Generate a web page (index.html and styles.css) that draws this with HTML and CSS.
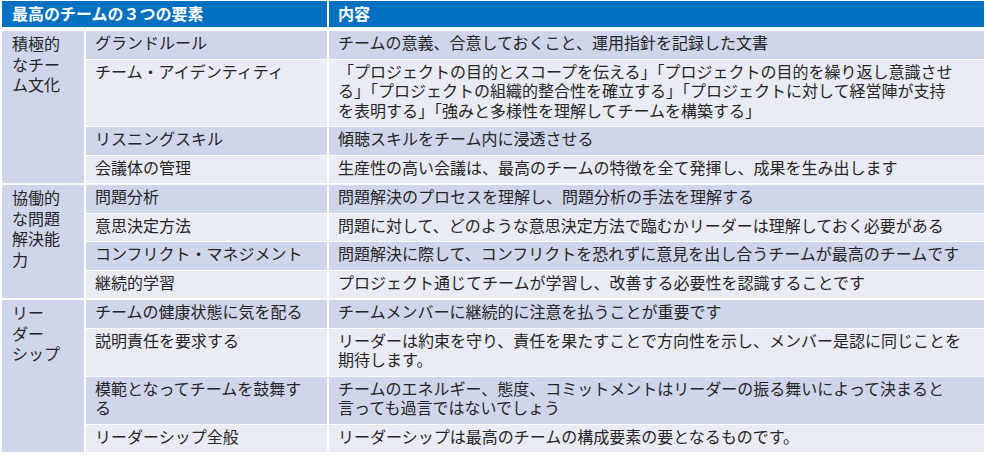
FILE: index.html
```html
<!DOCTYPE html>
<html lang="ja">
<head>
<meta charset="utf-8">
<link rel="stylesheet" href="styles.css">
</head>
<body>
<table class="tbl">
  <colgroup>
    <col class="c1"><col class="c2"><col class="c3">
  </colgroup>
  <thead>
    <tr>
      <th colspan="2">最高のチームの３つの要素</th>
      <th>内容</th>
    </tr>
  </thead>
  <tbody>
    <tr class="dark group">
      <td rowspan="4" class="cat">積極的<br>なチー<br>ム文化</td>
      <td>グランドルール</td>
      <td>チームの意義、合意しておくこと、運用指針を記録した文書</td>
    </tr>
    <tr class="light">
      <td>チーム・アイデンティティ</td>
      <td>「プロジェクトの目的とスコープを伝える」「プロジェクトの目的を繰り返し意識させ<br>る」「プロジェクトの組織的整合性を確立する」「プロジェクトに対して経営陣が支持<br>を表明する」「強みと多様性を理解してチームを構築する」</td>
    </tr>
    <tr class="dark">
      <td>リスニングスキル</td>
      <td>傾聴スキルをチーム内に浸透させる</td>
    </tr>
    <tr class="light">
      <td>会議体の管理</td>
      <td>生産性の高い会議は、最高のチームの特徴を全て発揮し、成果を生み出します</td>
    </tr>
    <tr class="dark group">
      <td rowspan="4" class="cat">協働的<br>な問題<br>解決能<br>力</td>
      <td>問題分析</td>
      <td>問題解決のプロセスを理解し、問題分析の手法を理解する</td>
    </tr>
    <tr class="light">
      <td>意思決定方法</td>
      <td>問題に対して、どのような意思決定方法で臨むかリーダーは理解しておく必要がある</td>
    </tr>
    <tr class="dark">
      <td>コンフリクト・マネジメント</td>
      <td>問題解決に際して、コンフリクトを恐れずに意見を出し合うチームが最高のチームです</td>
    </tr>
    <tr class="light">
      <td>継続的学習</td>
      <td>プロジェクト通じてチームが学習し、改善する必要性を認識することです</td>
    </tr>
    <tr class="dark group">
      <td rowspan="4" class="cat">リー<br>ダー<br>シップ</td>
      <td>チームの健康状態に気を配る</td>
      <td>チームメンバーに継続的に注意を払うことが重要です</td>
    </tr>
    <tr class="light">
      <td>説明責任を要求する</td>
      <td>リーダーは約束を守り、責任を果たすことで方向性を示し、メンバー是認に同じことを<br>期待します。</td>
    </tr>
    <tr class="dark">
      <td>模範となってチームを鼓舞す<br>る</td>
      <td>チームのエネルギー、態度、コミットメントはリーダーの振る舞いによって決まると<br>言っても過言ではないでしょう</td>
    </tr>
    <tr class="light">
      <td>リーダーシップ全般</td>
      <td>リーダーシップは最高のチームの構成要素の要となるものです。</td>
    </tr>
  </tbody>
</table>
</body>
</html>
```
FILE: styles.css
```css
html, body {
  margin: 0;
  padding: 0;
  background: #ffffff;
}

body {
  font-family: "Noto Sans CJK JP", "Noto Sans", sans-serif;
  font-size: 16px;
  color: #262626;
}

.tbl {
  margin: 1px 0 0 2px;
  width: 982px;
  table-layout: fixed;
  border-collapse: collapse;
}

.c1 { width: 83px; }
.c2 { width: 243px; }
.c3 { width: 656px; }

.tbl th {
  background: #0070c0;
  color: #ffffff;
  font-weight: bold;
  text-align: left;
  line-height: 19px;
  padding: 3px 8px 4px 9px;
  border-left: 2px solid #ffffff;
  border-right: 2px solid #ffffff;
  border-bottom: 4px solid #ffffff;
  white-space: nowrap;
}

.tbl th:first-child {
  border-left: none;
  padding-left: 10px;
}

.tbl th:last-child {
  border-right: none;
}

.tbl td {
  line-height: 19.5px;
  padding: 2px 4px 6px 9px;
  vertical-align: top;
  white-space: nowrap;
  border-top: 1px solid #ffffff;
  border-bottom: 1px solid #ffffff;
  border-left: 2px solid #ffffff;
  border-right: 2px solid #ffffff;
}

.tbl td:first-child {
  border-left: none;
}

.tbl td:last-child {
  border-right: none;
}

.group td {
  border-top: 2px solid #ffffff;
}

.dark td {
  background: #cfd5ea;
}

.light td {
  background: #e9ebf5;
}

.tbl td.cat {
  background: #cfd5ea;
  line-height: 20.5px;
  padding-left: 10px;
}
```
